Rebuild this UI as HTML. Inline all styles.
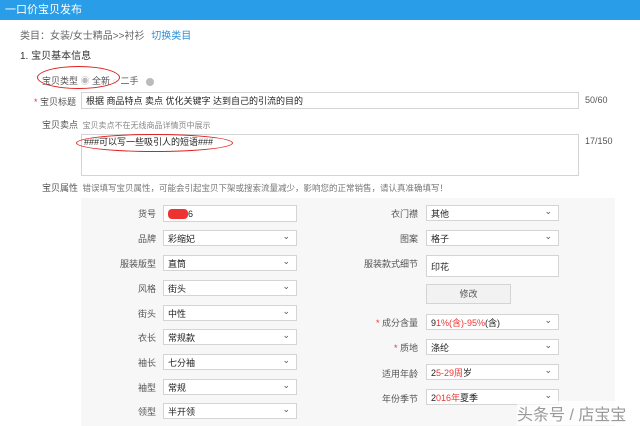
<!DOCTYPE html><html><head><meta charset="utf-8"><style>
body{margin:0;width:640px;height:426px;overflow:hidden;background:#fff;font-family:"Liberation Sans","Noto Sans CJK SC",sans-serif;font-size:9px;color:#333;position:relative}
.a{position:absolute;white-space:nowrap}
.hd{left:0;top:0;width:640px;height:20px;background:#2a9de8;color:#fff;font-size:11px;line-height:20px;text-indent:5px}
.in{position:absolute;border:1px solid #d4d4d4;background:#fff;height:16px;line-height:16px;box-sizing:border-box;padding-left:4px;font-size:9px;color:#222}
.sel:after{content:"⌄";position:absolute;right:6px;top:-3px;font-size:9px;color:#555}
.lb{position:absolute;text-align:right;width:80px;color:#555;font-size:9px;margin-top:-1px}
.rst{color:#e33}
.ell{position:absolute;border:1.5px solid #e02020;border-radius:50%}
</style></head><body>
<div class="a hd">一口价宝贝发布</div>
<div class="a" style="left:20px;top:27px;color:#666;font-size:10px">类目：女装/女士精品&gt;&gt;衬衫 <span style="color:#2a8fd8;margin-left:4px">切换类目</span></div>
<div class="a" style="left:20px;top:47px;font-size:10px">1. 宝贝基本信息</div>
<div class="a" style="left:42px;top:74px;color:#555">宝贝类型 <span style="color:#bbb">◉</span> 全新 <span style="color:#ccc">○</span> 二手 <span style="display:inline-block;width:8px;height:8px;border-radius:50%;background:#bbb;vertical-align:middle;margin-left:5px"></span></div>
<div class="ell" style="left:37px;top:66px;width:81px;height:21px"></div>
<div class="a" style="left:34px;top:95px;color:#555"><span class="rst">*</span> 宝贝标题</div>
<div class="in" style="left:81px;top:92px;width:498px;height:17px">根据 商品特点 卖点 优化关键字 达到自己的引流的目的</div>
<div class="a" style="left:585px;top:95px;color:#555">50/60</div>
<div class="a" style="left:42px;top:118px;color:#555">宝贝卖点 <span style="color:#888;font-size:8px;margin-left:2px">宝贝卖点不在无线商品详情页中展示</span></div>
<div class="in" style="left:81px;top:134px;width:498px;height:42px;line-height:14px;padding-left:2px">###可以写一些吸引人的短语###</div>
<div class="ell" style="left:76px;top:134px;width:155px;height:16px"></div>
<div class="a" style="left:585px;top:136px;color:#555">17/150</div>
<div class="a" style="left:42px;top:181px;color:#555">宝贝属性 <span style="color:#777;font-size:8.5px;margin-left:2px">错误填写宝贝属性，可能会引起宝贝下架或搜索流量减少，影响您的正常销售，请认真准确填写！</span></div>
<div class="a" style="left:81px;top:198px;width:534px;height:228px;background:#f7f7f7"></div>

<div class="lb" style="left:76px;top:208px">货号</div><div class="in" style="left:163px;top:205px;width:134px;height:17px"><span style="background:#e33;color:#e33;border-radius:4px">8888</span>6</div>
<div class="lb" style="left:76px;top:233px">品牌</div><div class="in sel" style="left:163px;top:230px;width:134px">彩缩妃</div>
<div class="lb" style="left:76px;top:258px">服装版型</div><div class="in sel" style="left:163px;top:255px;width:134px">直筒</div>
<div class="lb" style="left:76px;top:283px">风格</div><div class="in sel" style="left:163px;top:280px;width:134px">街头</div>
<div class="lb" style="left:76px;top:308px">街头</div><div class="in sel" style="left:163px;top:305px;width:134px">中性</div>
<div class="lb" style="left:76px;top:332px">衣长</div><div class="in sel" style="left:163px;top:329px;width:134px">常规款</div>
<div class="lb" style="left:76px;top:357px">袖长</div><div class="in sel" style="left:163px;top:354px;width:134px">七分袖</div>
<div class="lb" style="left:76px;top:382px">袖型</div><div class="in sel" style="left:163px;top:379px;width:134px">常规</div>
<div class="lb" style="left:76px;top:406px">领型</div><div class="in sel" style="left:163px;top:403px;width:134px">半开领</div>

<div class="lb" style="left:338px;top:208px">衣门襟</div><div class="in sel" style="left:426px;top:205px;width:133px">其他</div>
<div class="lb" style="left:338px;top:233px">图案</div><div class="in sel" style="left:426px;top:230px;width:133px">格子</div>
<div class="lb" style="left:338px;top:258px">服装款式细节</div><div class="in" style="left:426px;top:255px;width:133px;height:22px;line-height:22px">印花</div>
<div class="in" style="left:426px;top:284px;width:85px;height:20px;line-height:18px;background:#f2f2f2;text-align:center;padding:0;color:#555">修改</div>
<div class="lb" style="left:338px;top:317px"><span class="rst">*</span> 成分含量</div><div class="in sel" style="left:426px;top:314px;width:133px">9<span style="color:#e33">1%(含)-95%</span>(含)</div>
<div class="lb" style="left:338px;top:342px"><span class="rst">*</span> 质地</div><div class="in sel" style="left:426px;top:339px;width:133px">涤纶</div>
<div class="lb" style="left:338px;top:368px">适用年龄</div><div class="in sel" style="left:426px;top:364px;width:133px">2<span style="color:#e33">5-29周</span>岁</div>
<div class="lb" style="left:338px;top:393px">年份季节</div><div class="in sel" style="left:426px;top:389px;width:133px">2<span style="color:#e33">016年</span>夏季</div>
<div class="a" style="left:517px;top:401px;font-size:16px;color:#999;background:rgba(255,255,255,.7)">头条号 / 店宝宝</div>
</body></html>
